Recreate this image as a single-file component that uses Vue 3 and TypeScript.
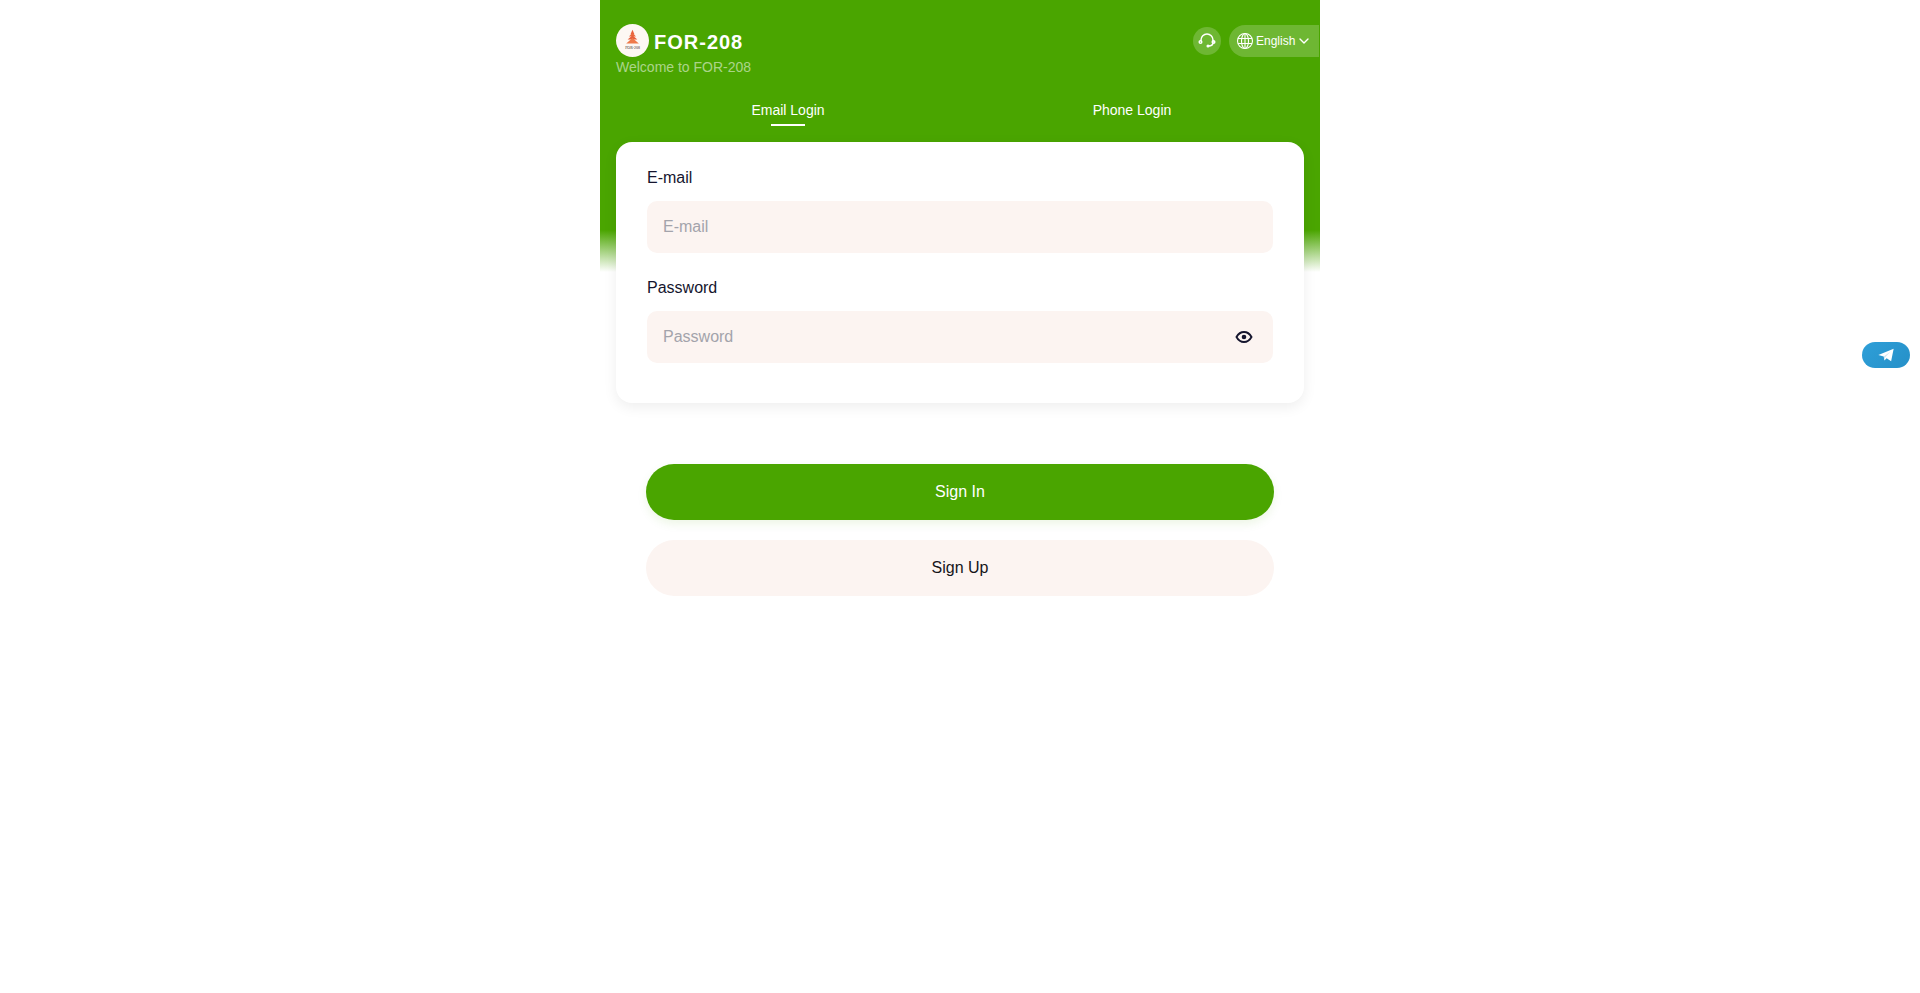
<script setup lang="ts">
import { ref } from "vue";

const tabs = ["Email Login", "Phone Login"];
const activeTab = ref(0);
</script>

<template>
  <div class="page">
    <div class="phone">
      <header class="top">
        <div class="brand">
          <div class="brand__row">
            <span class="logo">
              <svg viewBox="0 0 34 34" width="33" height="33">
                <circle cx="17" cy="17" r="17" fill="#fdf8f3" />
                <path d="M17 6l2 4.500h-4z" fill="#e8603c" />
                <path d="M17 9l3.600 4h-7.200z" fill="#ea6a3f" />
                <path d="M17 11.500l5 4.500H12z" fill="#e8603c" />
                <path d="M17 14.500l6.500 5.500h-13z" fill="#ef7a4a" />
                <text class="logo__text" x="17" y="26" text-anchor="middle">FOR-208</text>
              </svg>
            </span>
            <span class="brand__name">FOR-208</span>
          </div>
          <div class="brand__sub">Welcome to FOR-208</div>
        </div>
        <div class="tools">
          <span class="support">
            <svg viewBox="0 0 20 20" width="20" height="20" fill="none" stroke="#fff" stroke-width="1.500" stroke-linecap="round">
              <path d="M4 9.500V9a6 6 0 0 1 12 0v2.500c0 2-1.500 3.500-4.500 3.500" />
              <circle cx="3.500" cy="11" r="1.300" />
              <circle cx="16.500" cy="11" r="1.300" />
              <circle cx="11" cy="15" r="0.800" fill="#fff" />
            </svg>
          </span>
          <span class="lang">
            <svg viewBox="0 0 18 18" width="18" height="18" fill="none" stroke="#fff" stroke-width="1.100">
              <circle cx="9" cy="9" r="7.500" />
              <ellipse cx="9" cy="9" rx="3.500" ry="7.500" />
              <path d="M2 6.500h14M2 11.500h14M9 1.500v15" />
            </svg>
            <span>English</span>
            <svg viewBox="0 0 12 12" width="12" height="12" fill="none" stroke="#fff" stroke-width="1.400" stroke-linecap="round" stroke-linejoin="round">
              <path d="M2 4l4 4 4-4" />
            </svg>
          </span>
        </div>
      </header>

      <nav class="tabs">
        <button
          v-for="(tab, i) in tabs"
          :key="tab"
          class="tabs__item"
          :class="{ 'tabs__item--on': activeTab === i }"
          @click="activeTab = i"
        >
          {{ tab }}
        </button>
      </nav>

      <form class="card" @submit.prevent>
        <label class="field">
          <span class="field__label">E-mail</span>
          <span class="field__box">
            <input class="field__input" type="text" placeholder="E-mail" />
          </span>
        </label>
        <label class="field">
          <span class="field__label">Password</span>
          <span class="field__box">
            <input class="field__input" type="password" placeholder="Password" />
            <svg viewBox="0 0 20 20" width="20" height="20" fill="none">
              <path d="M2.500 10c1.900-3.400 4.400-5 7.500-5s5.600 1.600 7.500 5c-1.900 3.400-4.400 5-7.500 5s-5.600-1.600-7.500-5z" stroke="#15152e" stroke-width="1.900" />
              <circle cx="10" cy="10" r="2.300" fill="#15152e" />
            </svg>
          </span>
        </label>
      </form>

      <div class="actions">
        <button class="btn btn--primary">Sign In</button>
        <button class="btn btn--soft">Sign Up</button>
      </div>
    </div>

    <a class="telegram" aria-label="Telegram">
      <svg viewBox="0 0 20 20" width="18" height="18">
        <path d="M1.500 10L18.500 3l-2.800 14-5-3.500-2.500 2.500-.7-4.300z" fill="#fff" />
        <path d="M7.500 11.700L15 6l-5.800 6.500-.9 3z" fill="#d3e7f3" />
      </svg>
    </a>
  </div>
</template>

<style>
html,
body {
  margin: 0;
  background: #fff;
}
</style>

<style scoped>
.page {
  min-height: 993px;
  font-family: "Liberation Sans", Arial, sans-serif;
}

.phone {
  width: 720px;
  min-height: 993px;
  margin: 0 auto;
  box-sizing: border-box;
  padding: 24px 0 0;
  background: linear-gradient(#4aa500 0, #4aa500 230px, #fff 272px);
}

.top {
  display: flex;
  justify-content: space-between;
  padding: 0 1px 0 16px;
}

.brand__row {
  display: flex;
  align-items: center;
  gap: 5px;
  height: 33px;
}

.logo {
  display: block;
  width: 33px;
  height: 33px;
}

.logo svg {
  display: block;
}

.logo__text {
  fill: #3a2a25;
  font-size: 4px;
  font-family: "Liberation Serif", serif;
}

.brand__name {
  position: relative;
  top: 2px;
  color: #fff;
  font-size: 20px;
  font-weight: 700;
  letter-spacing: 1px;
}

.brand__sub {
  margin-top: 1px;
  color: rgba(255, 255, 255, 0.55);
  font-size: 14px;
  line-height: 18px;
}

.tools {
  display: flex;
  align-items: center;
  gap: 8px;
  height: 33px;
}

.support {
  display: flex;
  align-items: center;
  justify-content: center;
  width: 28px;
  height: 28px;
  border-radius: 50%;
  background: rgba(255, 255, 255, 0.2);
}

.lang {
  display: flex;
  align-items: center;
  gap: 2px;
  box-sizing: border-box;
  width: 90px;
  height: 32px;
  padding-left: 7px;
  border-radius: 16px 0 0 16px;
  background: rgba(255, 255, 255, 0.2);
  color: #fff;
  font-size: 12px;
}

.lang svg:last-child {
  margin-left: 1px;
}

.tabs {
  display: flex;
  margin: 18px 16px 0;
}

.tabs__item {
  position: relative;
  flex: 1;
  height: 32px;
  padding: 0;
  border: 0;
  background: none;
  color: #fff;
  font: 14px "Liberation Sans", Arial, sans-serif;
  cursor: pointer;
}

.tabs__item--on::after {
  content: "";
  position: absolute;
  left: 50%;
  bottom: 0;
  width: 34px;
  height: 2px;
  margin-left: -17px;
  background: #fff;
}

.card {
  display: flex;
  flex-direction: column;
  gap: 24px;
  box-sizing: border-box;
  height: 261px;
  margin: 16px 16px 0;
  padding: 25px 31px 0;
  border-radius: 16px;
  background: #fff;
  box-shadow: 0 4px 14px rgba(0, 0, 0, 0.07);
}

.field {
  display: block;
}

.field__label {
  display: block;
  color: #15152e;
  font-size: 16px;
  line-height: 22px;
}

.field__box {
  display: flex;
  align-items: center;
  height: 52px;
  margin-top: 12px;
  padding: 0 19px 0 16px;
  border-radius: 10px;
  background: #fcf4f1;
}

.field__input {
  flex: 1;
  min-width: 0;
  padding: 0;
  border: 0;
  outline: 0;
  background: none;
  color: #15152e;
  font: 16px "Liberation Sans", Arial, sans-serif;
}

.field__input::placeholder {
  color: #a3a3ab;
}

.actions {
  display: flex;
  flex-direction: column;
  gap: 20px;
  margin: 61px 46px 0;
}

.btn {
  height: 56px;
  padding: 0;
  border: 0;
  border-radius: 28px;
  font: 16px "Liberation Sans", Arial, sans-serif;
  cursor: pointer;
}

.btn--primary {
  background: #4aa500;
  color: #fff;
  box-shadow: 0 4px 10px rgba(74, 165, 0, 0.1);
}

.btn--soft {
  background: #fcf4f1;
  color: #15151a;
}

.telegram {
  position: fixed;
  top: 342px;
  right: 10px;
  display: flex;
  align-items: center;
  justify-content: center;
  width: 48px;
  height: 26px;
  border-radius: 13px;
  background: linear-gradient(135deg, #2e9fd8, #2690c8);
}
</style>
